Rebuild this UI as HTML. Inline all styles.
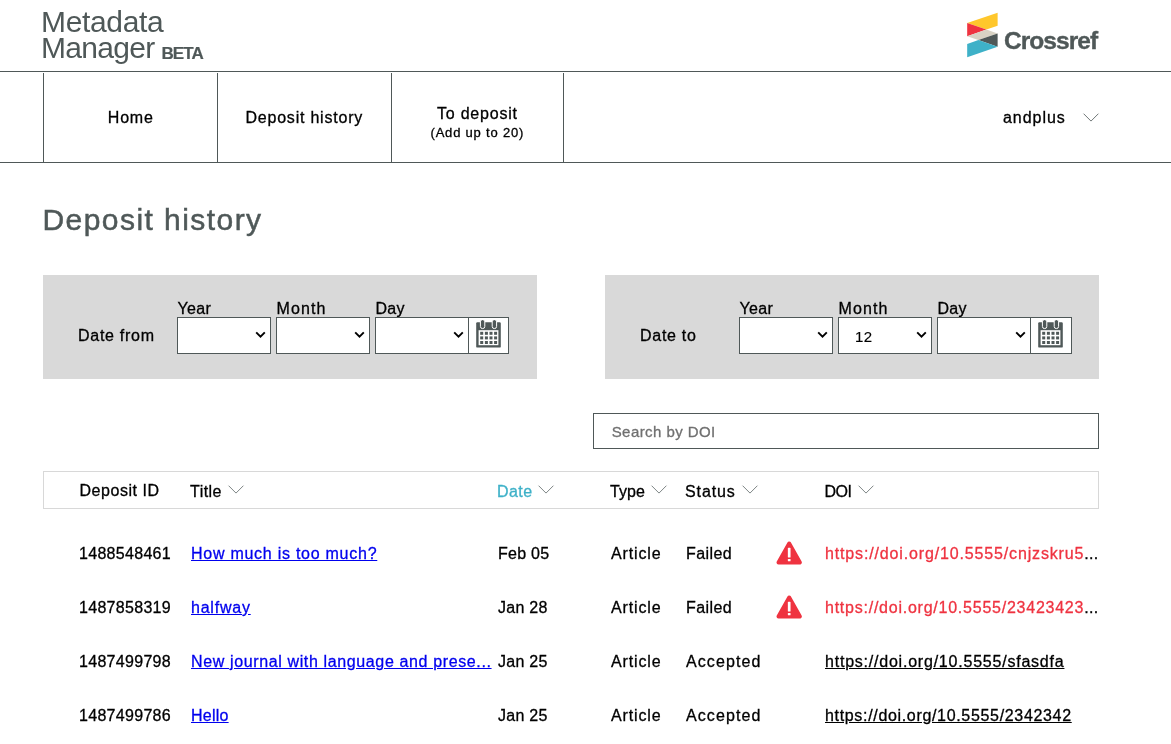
<!DOCTYPE html>
<html lang="en">
<head>
<meta charset="utf-8">
<title>Metadata Manager - Deposit history</title>
<style>
*{box-sizing:border-box;margin:0;padding:0}
html,body{width:1171px;height:744px;overflow:hidden;background:#fff}
body{position:relative;will-change:transform;-webkit-text-stroke:.3px;font-family:"Liberation Sans",Arial,Helvetica,sans-serif;font-size:16px;color:#000}
.t{position:absolute;white-space:nowrap;line-height:20px;height:20px}
.g{color:#4f5858;-webkit-text-stroke:0}
/* header */
.brand1,.brand2{font-size:30px;line-height:30px;height:30px;letter-spacing:-.34px}
.beta{-webkit-text-stroke:.2px;font-size:17px;font-weight:bold;letter-spacing:-.95px}
.brand2{letter-spacing:-.7px}
.hline{position:absolute;left:0;width:1171px;height:1px;background:#4f5858}
.vline{position:absolute;top:73px;height:89px;width:1px;background:#4f5858}
.cr{-webkit-text-stroke:.35px;font-size:24.5px;font-weight:bold;letter-spacing:-.95px;line-height:28px;height:28px}
/* nav */
.nav{font-size:16px;letter-spacing:.78px}
.navs{font-size:13px;letter-spacing:.8px}
h1.t{-webkit-text-stroke:.5px;font-size:30px;font-weight:normal;line-height:34px;height:34px;letter-spacing:1.44px}
/* date panels */
.panel{position:absolute;top:275px;width:494px;height:104px;background:#d9d9d9}
.panel .t{letter-spacing:.72px}
.panel .lb{letter-spacing:.3px}
.sel{position:absolute;top:42px;width:94px;height:37px;background:#fff;border:1px solid #4f5858}
.sel svg{position:absolute;left:77px;top:13px}
.sel span{position:absolute;left:16px;top:9px;line-height:20px;font-size:15px;letter-spacing:.3px;-webkit-text-stroke:.15px}
.cal{position:absolute;left:425px;top:42px;width:41px;height:37px;background:#fff;border:1px solid #4f5858}
.cal svg{position:absolute;left:7px;top:2px}
/* search */
.search{position:absolute;left:593px;top:413px;width:506px;height:36px;border:1px solid #4f5858;background:#fff}
.search span{position:absolute;left:17.7px;top:8px;font-size:15px;line-height:20px;color:#707070;letter-spacing:.43px;white-space:nowrap}
/* table */
.thead{position:absolute;left:43px;top:471px;width:1056px;height:38px;border:1px solid #d8d8d8}
.th{letter-spacing:.45px}
.chev{position:absolute}
.row{position:absolute;left:0;width:1171px;height:20px}
.row .t{top:0}
a{color:#0000ee;text-decoration:underline}
.c-id{left:79px;letter-spacing:.3px}
.c-ttl{left:191px;letter-spacing:.55px}
.c-date{left:498px;letter-spacing:.25px}
.c-type{left:611px;letter-spacing:.85px}
.c-st{left:686px;letter-spacing:.4px}
.doi{left:825px;letter-spacing:.5px}
.doi a{color:#000}
.el{letter-spacing:.3px}
.doi a.bad{color:#ef3340;text-decoration:none}
.warn{position:absolute;left:776px;top:-7px}
</style>
</head>
<body>

<!-- brand -->
<div class="t g brand1" style="left:41px;top:6.5px">Metadata</div>
<div class="t g brand2" style="left:41px;top:32.5px">Manager</div>
<div class="t g beta" style="left:161.5px;top:43.5px">BETA</div>

<!-- Crossref logo -->
<svg style="position:absolute;left:960px;top:8px" width="46" height="54" viewBox="960 8 46 54">
  <polygon fill="#ffc72c" points="967.2,22.9 997.6,12.7 997.6,25.8 986.4,29.6"/>
  <polygon fill="#ef3340" points="967.2,22.9 986.4,29.6 967.2,36.3"/>
  <polygon fill="#d8d2c4" points="967.2,36.3 986.4,29.6 997.6,33.4 978.4,40.1"/>
  <polygon fill="#4f5858" points="997.6,33.4 997.6,46.8 978.4,40.1"/>
  <polygon fill="#3eb1c8" points="967.2,43.9 978.4,40.1 997.6,46.8 967.2,57.3"/>
</svg>
<div class="t g cr" style="left:1004px;top:26.5px">Crossref</div>

<!-- nav -->
<div class="hline" style="top:71px"></div>
<div class="hline" style="top:162px"></div>
<div class="vline" style="left:43px"></div>
<div class="vline" style="left:217px"></div>
<div class="vline" style="left:391px"></div>
<div class="vline" style="left:563px"></div>
<div class="t nav" style="left:107.8px;top:108px">Home</div>
<div class="t nav" style="left:245.5px;top:108px">Deposit history</div>
<div class="t nav" style="left:437px;top:104px">To deposit</div>
<div class="t navs" style="left:430.5px;top:123px">(Add up to 20)</div>
<div class="t nav" style="left:1003px;top:108px;letter-spacing:.95px">andplus</div>
<svg class="chev" style="left:1082px;top:111.6px" width="18" height="11" viewBox="0 0 18 11"><path d="M1.6 1.7 L9 9.1 L16.4 1.7" fill="none" stroke="#5f6868" stroke-width=".9"/></svg>

<!-- title -->
<h1 class="t g" style="left:42.5px;top:203px">Deposit history</h1>

<!-- date from -->
<div class="panel" style="left:43px">
  <div class="t" style="left:35px;top:51px">Date from</div>
  <div class="t lb" style="left:134.5px;top:24px">Year</div>
  <div class="t lb" style="left:233.5px;top:24px;letter-spacing:1.1px">Month</div>
  <div class="t lb" style="left:332.5px;top:24px">Day</div>
  <div class="sel" style="left:134px"><svg width="11" height="8" viewBox="0 0 11 8"><path d="M1.2 1.4 L5.5 5.7 L9.8 1.4" fill="none" stroke="#000" stroke-width="1.9"/></svg></div>
  <div class="sel" style="left:233px"><svg width="11" height="8" viewBox="0 0 11 8"><path d="M1.2 1.4 L5.5 5.7 L9.8 1.4" fill="none" stroke="#000" stroke-width="1.9"/></svg></div>
  <div class="sel" style="left:332px"><svg width="11" height="8" viewBox="0 0 11 8"><path d="M1.2 1.4 L5.5 5.7 L9.8 1.4" fill="none" stroke="#000" stroke-width="1.9"/></svg></div>
  <div class="cal"><svg width="26" height="30" viewBox="0 0 26 30">
    <rect x="0.2" y="2.2" width="24.6" height="25.4" rx="1.2" fill="#4f5858"/>
    <rect x="2.6" y="10.2" width="19.8" height="15" fill="#fff"/>
    <g fill="#4f5858">
      <rect x="4.2" y="11.8" width="3" height="3"/><rect x="8.9" y="11.8" width="3" height="3"/><rect x="13.5" y="11.8" width="3" height="3"/><rect x="18.1" y="11.8" width="3" height="3"/>
      <rect x="4.2" y="16.4" width="3" height="3"/><rect x="8.9" y="16.4" width="3" height="3"/><rect x="13.5" y="16.4" width="3" height="3"/><rect x="18.1" y="16.4" width="3" height="3"/>
      <rect x="4.2" y="21" width="3" height="3"/><rect x="8.9" y="21" width="3" height="3"/><rect x="13.5" y="21" width="3" height="3"/><rect x="18.1" y="21" width="3" height="3"/>
    </g>
    <rect x="4.4" y="-0.4" width="4.4" height="9" rx="2.2" fill="#4f5858" stroke="#fff" stroke-width="1"/>
    <rect x="16.2" y="-0.4" width="4.4" height="9" rx="2.2" fill="#4f5858" stroke="#fff" stroke-width="1"/>
  </svg></div>
</div>

<!-- date to -->
<div class="panel" style="left:605px">
  <div class="t" style="left:35px;top:51px">Date to</div>
  <div class="t lb" style="left:134.5px;top:24px">Year</div>
  <div class="t lb" style="left:233.5px;top:24px;letter-spacing:1.1px">Month</div>
  <div class="t lb" style="left:332.5px;top:24px">Day</div>
  <div class="sel" style="left:134px"><svg width="11" height="8" viewBox="0 0 11 8"><path d="M1.2 1.4 L5.5 5.7 L9.8 1.4" fill="none" stroke="#000" stroke-width="1.9"/></svg></div>
  <div class="sel" style="left:233px"><span>12</span><svg width="11" height="8" viewBox="0 0 11 8"><path d="M1.2 1.4 L5.5 5.7 L9.8 1.4" fill="none" stroke="#000" stroke-width="1.9"/></svg></div>
  <div class="sel" style="left:332px"><svg width="11" height="8" viewBox="0 0 11 8"><path d="M1.2 1.4 L5.5 5.7 L9.8 1.4" fill="none" stroke="#000" stroke-width="1.9"/></svg></div>
  <div class="cal" style="width:42px"><svg width="26" height="30" viewBox="0 0 26 30">
    <rect x="0.2" y="2.2" width="24.6" height="25.4" rx="1.2" fill="#4f5858"/>
    <rect x="2.6" y="10.2" width="19.8" height="15" fill="#fff"/>
    <g fill="#4f5858">
      <rect x="4.2" y="11.8" width="3" height="3"/><rect x="8.9" y="11.8" width="3" height="3"/><rect x="13.5" y="11.8" width="3" height="3"/><rect x="18.1" y="11.8" width="3" height="3"/>
      <rect x="4.2" y="16.4" width="3" height="3"/><rect x="8.9" y="16.4" width="3" height="3"/><rect x="13.5" y="16.4" width="3" height="3"/><rect x="18.1" y="16.4" width="3" height="3"/>
      <rect x="4.2" y="21" width="3" height="3"/><rect x="8.9" y="21" width="3" height="3"/><rect x="13.5" y="21" width="3" height="3"/><rect x="18.1" y="21" width="3" height="3"/>
    </g>
    <rect x="4.4" y="-0.4" width="4.4" height="9" rx="2.2" fill="#4f5858" stroke="#fff" stroke-width="1"/>
    <rect x="16.2" y="-0.4" width="4.4" height="9" rx="2.2" fill="#4f5858" stroke="#fff" stroke-width="1"/>
  </svg></div>
</div>

<!-- search -->
<div class="search"><span>Search by DOI</span></div>

<!-- table header -->
<div class="thead"></div>
<div class="t th" style="left:79.5px;top:481px;letter-spacing:.55px">Deposit ID</div>
<div class="t th" style="left:190px;top:482px">Title</div>
<svg class="chev" style="left:227px;top:484px" width="18" height="11" viewBox="0 0 18 11"><path d="M1.6 1.7 L9 9.1 L16.4 1.7" fill="none" stroke="#6e7676" stroke-width=".9"/></svg>
<div class="t th" style="left:497px;top:482px;color:#3eb1c8">Date</div>
<svg class="chev" style="left:536.5px;top:484px" width="18" height="11" viewBox="0 0 18 11"><path d="M1.6 1.7 L9 9.1 L16.4 1.7" fill="none" stroke="#6e7676" stroke-width=".9"/></svg>
<div class="t th" style="left:610px;top:482px;letter-spacing:.1px">Type</div>
<svg class="chev" style="left:650px;top:484px" width="18" height="11" viewBox="0 0 18 11"><path d="M1.6 1.7 L9 9.1 L16.4 1.7" fill="none" stroke="#6e7676" stroke-width=".9"/></svg>
<div class="t th" style="left:685px;top:482px;letter-spacing:.9px">Status</div>
<svg class="chev" style="left:740.5px;top:484px" width="18" height="11" viewBox="0 0 18 11"><path d="M1.6 1.7 L9 9.1 L16.4 1.7" fill="none" stroke="#6e7676" stroke-width=".9"/></svg>
<div class="t th" style="left:824.5px;top:482px;letter-spacing:-.5px">DOI</div>
<svg class="chev" style="left:856.5px;top:484px" width="18" height="11" viewBox="0 0 18 11"><path d="M1.6 1.7 L9 9.1 L16.4 1.7" fill="none" stroke="#6e7676" stroke-width=".9"/></svg>

<!-- rows -->
<div class="row" style="top:544px">
  <div class="t c-id">1488548461</div>
  <div class="t c-ttl" style="letter-spacing:.74px"><a>How much is too much?</a></div>
  <div class="t c-date">Feb 05</div>
  <div class="t c-type">Article</div>
  <div class="t c-st">Failed</div>
  <svg class="warn" width="27" height="30" viewBox="0 0 27 30"><path d="M13.2 6.5 L23.9 25.5 H2.5 Z" fill="#ef3340" stroke="#ef3340" stroke-width="4" stroke-linejoin="round"/><rect x="11.85" y="10.8" width="2.7" height="9.8" rx=".6" fill="#fff"/><rect x="11.85" y="21.9" width="2.7" height="2.3" rx=".5" fill="#fff"/></svg>
  <div class="t doi" style="letter-spacing:.85px"><a class="bad">https://doi.org/10.5555/cnjzskru5</a><span class="el">...</span></div>
</div>
<div class="row" style="top:598px">
  <div class="t c-id">1487858319</div>
  <div class="t c-ttl" style="letter-spacing:.78px"><a>halfway</a></div>
  <div class="t c-date">Jan 28</div>
  <div class="t c-type">Article</div>
  <div class="t c-st">Failed</div>
  <svg class="warn" width="27" height="30" viewBox="0 0 27 30"><path d="M13.2 6.5 L23.9 25.5 H2.5 Z" fill="#ef3340" stroke="#ef3340" stroke-width="4" stroke-linejoin="round"/><rect x="11.85" y="10.8" width="2.7" height="9.8" rx=".6" fill="#fff"/><rect x="11.85" y="21.9" width="2.7" height="2.3" rx=".5" fill="#fff"/></svg>
  <div class="t doi" style="letter-spacing:.76px"><a class="bad">https://doi.org/10.5555/23423423</a><span class="el">...</span></div>
</div>
<div class="row" style="top:652px">
  <div class="t c-id">1487499798</div>
  <div class="t c-ttl" style="letter-spacing:.63px"><a>New journal with language and prese...</a></div>
  <div class="t c-date">Jan 25</div>
  <div class="t c-type">Article</div>
  <div class="t c-st" style="letter-spacing:1.1px">Accepted</div>
  <div class="t doi" style="letter-spacing:.78px"><a>https://doi.org/10.5555/sfasdfa</a></div>
</div>
<div class="row" style="top:706px">
  <div class="t c-id">1487499786</div>
  <div class="t c-ttl" style="letter-spacing:.23px"><a>Hello</a></div>
  <div class="t c-date">Jan 25</div>
  <div class="t c-type">Article</div>
  <div class="t c-st" style="letter-spacing:1.1px">Accepted</div>
  <div class="t doi" style="letter-spacing:.67px"><a>https://doi.org/10.5555/2342342</a></div>
</div>

</body>
</html>
